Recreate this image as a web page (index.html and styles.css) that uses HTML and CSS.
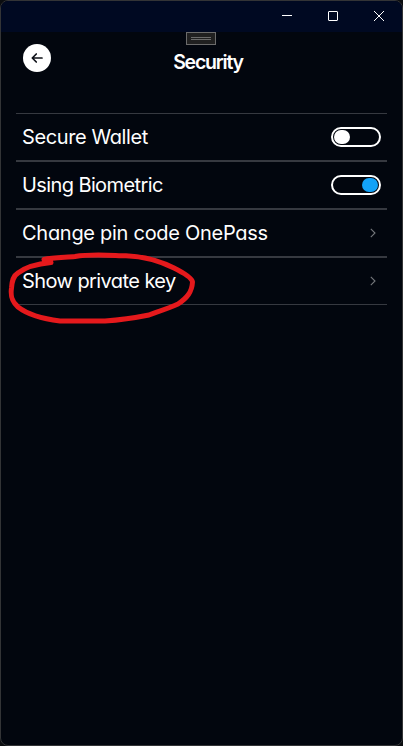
FILE: index.html
```html
<!DOCTYPE html>
<html lang="en">
<head>
<meta charset="utf-8">
<title>Security</title>
<link rel="stylesheet" href="styles.css">
</head>
<body>
<div class="window">
  <div class="titlebar">
    <svg class="control" viewBox="0 0 46 31"><path d="M18 14.5h10" /></svg>
    <svg class="control" viewBox="0 0 46 31"><rect x="18.5" y="10.500" width="9" height="9" rx=".5" /></svg>
    <svg class="control" viewBox="0 0 46 31"><path d="M18 10l10 10M28 10L18 20" /></svg>
  </div>
  <div class="grip"><span></span></div>
  <header class="header">
    <button class="back" aria-label="Back"><svg viewBox="0 0 28 28"><path d="M19 14H9.500M13.300 10L9.300 14l4 4" /></svg></button>
    <h1><span class="title">Security</span></h1>
  </header>
  <main class="list">
    <div class="row"><span class="label wallet">Secure Wallet</span><span class="switch"></span></div>
    <div class="row"><span class="label biometric">Using Biometric</span><span class="switch on"></span></div>
    <div class="row"><span class="label pin">Change pin code OnePass</span><svg class="chevron" viewBox="0 0 6 10"><path d="M.8.8L5 5 .8 9.200" /></svg></div>
    <div class="row"><span class="label key">Show private key</span><svg class="chevron" viewBox="0 0 6 10"><path d="M.8.8L5 5 .8 9.200" /></svg></div>
  </main>
  <svg class="marker" viewBox="0 245 205 85"><path d="M44 259.500C53 257 66 257.500 75 256.500C92 253.500 112 255.500 126 255.800C144 256.500 160 261 174 268C184 273 192 278 192.500 282C192 292 187 298 178 304C169 308 160 311 149 315C134 318 120 320 105 321H60C44 319 27 314 18 307C11 301 10.500 295 11.500 288C12 281 13 276 18 273C25 267.500 35 264 51 262.500" /></svg>
</div>
</body>
</html>
```
FILE: styles.css
```css
* { box-sizing: border-box; }
body {
  margin: 0;
  background: #0b0d10;
  font-family: Inter, "Liberation Sans", sans-serif;
  font-feature-settings: "cv11";
  color: #fff;
}
.window {
  position: relative;
  height: 746px;
  border: 1px solid #333436;
  border-radius: 8px;
  background: #02060e;
  overflow: hidden;
}
.titlebar {
  display: flex;
  justify-content: flex-end;
  height: 31px;
  background: #000922;
}
.control {
  width: 46px;
  height: 31px;
  fill: none;
  stroke: #fff;
  stroke-width: 1;
}
.grip {
  position: absolute;
  left: 185px;
  top: 31px;
  width: 30px;
  height: 13px;
  border: 1px solid #6b6b6b;
  background: #202020;
  padding: 4px;
}
.grip span {
  display: block;
  height: 3px;
  border: solid #6b6b6b;
  border-width: 1px 0;
}
.header {
  display: grid;
  grid-template-columns: 28px 1fr 28px;
  height: 81px;
  padding: 12px 20px 0 22px;
}
.back {
  width: 28px;
  height: 28px;
  border: 0;
  padding: 0;
  border-radius: 50%;
  background: #fff;
}
.back svg {
  display: block;
  fill: none;
  stroke: #10131a;
  stroke-width: 1.700;
  stroke-linecap: round;
  stroke-linejoin: round;
}
h1 {
  margin: 6px 0 0 11px;
  font-size: 19.500px;
  line-height: 24px;
  font-weight: 600;
  text-align: center;
}
.title { letter-spacing: -1.2px; }
.list { padding: 0 15px; }
.row {
  display: flex;
  align-items: center;
  justify-content: space-between;
  height: 48px;
  padding: 0 6px;
  border: solid #363940;
  border-width: 1px 0;
}
.label {
  font-size: 20px;
  line-height: 24px;
  white-space: nowrap;
}
.wallet { letter-spacing: -0.4px; }
.biometric { letter-spacing: -0.6px; }
.pin { letter-spacing: -0.28px; }
.key { letter-spacing: -0.58px; }
.switch {
  display: flex;
  align-items: center;
  width: 50px;
  height: 20px;
  padding: 0 1px;
  border: 2px solid #fff;
  border-radius: 10px;
}
.switch::before {
  content: "";
  width: 16px;
  height: 14px;
  border-radius: 7px;
  background: #fff;
}
.on { justify-content: flex-end; }
.on::before { background: #13a2f7; }
.chevron {
  width: 6px;
  height: 10px;
  margin-right: 5px;
  fill: none;
  stroke: #74777b;
  stroke-width: 1.100;
}
.marker {
  position: absolute;
  left: -1px;
  top: 244px;
  width: 205px;
  height: 85px;
  fill: none;
  stroke: #e5191c;
  stroke-width: 5;
  stroke-linecap: round;
  stroke-linejoin: round;
}
```
